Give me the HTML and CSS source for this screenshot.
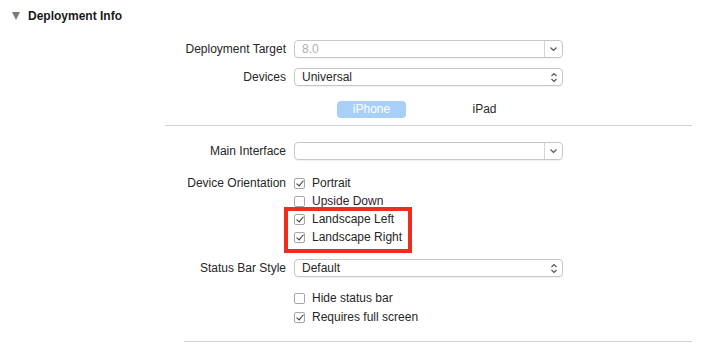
FILE: index.html
```html
<!DOCTYPE html>
<html lang="en">
<head>
    <meta charset="UTF-8">
    <title>Deployment Info</title>
    <link rel="stylesheet" href="styles.css">
</head>
<body>
    <div class="section-head">
        <span class="disclosure"></span>
        <span class="section-title">Deployment Info</span>
    </div>

    <div class="form">
        <div class="row">
            <label class="label">Deployment Target</label>
            <div class="popup combo">
                <span class="value muted">8.0</span>
                <span class="arrow-box">
                    <svg width="9" height="6" viewBox="0 0 9 6"><path d="M1.5 1.5 L4.5 4.5 L7.5 1.5" fill="none" stroke="#555" stroke-width="1.2"/></svg>
                </span>
            </div>
        </div>

        <div class="row">
            <label class="label">Devices</label>
            <div class="popup">
                <span class="value">Universal</span>
                <span class="stepper">
                    <svg width="8" height="11" viewBox="0 0 8 11"><path d="M1.5 4 L4 1.5 L6.5 4 M1.5 7 L4 9.5 L6.5 7" fill="none" stroke="#555" stroke-width="1.2"/></svg>
                </span>
            </div>
        </div>

        <div class="segments">
            <span class="segment active">iPhone</span>
            <span class="segment">iPad</span>
        </div>
    </div>

    <hr class="divider">

    <div class="form">
        <div class="row main-iface">
            <label class="label">Main Interface</label>
            <div class="popup combo">
                <span class="value"></span>
                <span class="arrow-box">
                    <svg width="9" height="6" viewBox="0 0 9 6"><path d="M1.5 1.5 L4.5 4.5 L7.5 1.5" fill="none" stroke="#555" stroke-width="1.2"/></svg>
                </span>
            </div>
        </div>

        <div class="row orient">
            <label class="label">Device Orientation</label>
            <div class="checks">
                <div class="check on"><span class="box"></span>Portrait</div>
                <div class="check"><span class="box"></span>Upside Down</div>
                <div class="highlight">
                    <div class="check on"><span class="box"></span>Landscape Left</div>
                    <div class="check on"><span class="box"></span>Landscape Right</div>
                </div>
            </div>
        </div>

        <div class="row status">
            <label class="label">Status Bar Style</label>
            <div class="popup">
                <span class="value">Default</span>
                <span class="stepper">
                    <svg width="8" height="11" viewBox="0 0 8 11"><path d="M1.5 4 L4 1.5 L6.5 4 M1.5 7 L4 9.5 L6.5 7" fill="none" stroke="#555" stroke-width="1.2"/></svg>
                </span>
            </div>
        </div>

        <div class="row extra">
            <span class="label"></span>
            <div class="checks tight">
                <div class="check"><span class="box"></span>Hide status bar</div>
                <div class="check on"><span class="box"></span>Requires full screen</div>
            </div>
        </div>
    </div>

    <hr class="divider bottom">
</body>
</html>
```

FILE: styles.css
```css
* {
    margin: 0;
    padding: 0;
    box-sizing: border-box;
}

body {
    background: #ffffff;
    font-family: 'Liberation Sans', Arial, sans-serif;
    font-size: 12px;
    color: #262626;
}

/* header */
.section-head {
    display: flex;
    align-items: center;
    height: 30px;
    padding-left: 12px;
    padding-top: 1px;
}

.disclosure {
    width: 0;
    height: 0;
    border-left: 4.5px solid transparent;
    border-right: 4.5px solid transparent;
    border-top: 8px solid #7a7a7a;
    margin-right: 8px;
}

.section-title {
    font-weight: bold;
    font-size: 12px;
    color: #1a1a1a;
}

/* form rows */
.form {
    padding-left: 166px;
}

.row {
    display: flex;
    align-items: flex-start;
    margin-top: 10px;
}

.label {
    width: 120px;
    margin-right: 8px;
    text-align: right;
    line-height: 18px;
    color: #262626;
}

.popup {
    position: relative;
    width: 269px;
    height: 18px;
    border: 1px solid #c6c6c6;
    border-radius: 4px;
    display: flex;
    align-items: center;
    box-shadow: 0 1px 0 rgba(0, 0, 0, 0.05);
}

.value {
    flex: 1;
    padding-left: 7px;
    line-height: 16px;
}

.muted {
    color: #b0b0b0;
}

.arrow-box {
    width: 18px;
    height: 16px;
    border-left: 1px solid #d4d4d4;
    display: flex;
    align-items: center;
    justify-content: center;
}

.stepper {
    width: 16px;
    display: flex;
    align-items: center;
    justify-content: center;
}

/* segmented */
.segments {
    display: flex;
    gap: 44px;
    margin-top: 15px;
    padding-left: 171px;
}

.segment {
    width: 69px;
    height: 17px;
    line-height: 17px;
    text-align: center;
    border-radius: 4px;
    color: #2a2a2a;
}

.segment.active {
    background: #a8cff8;
    color: #ffffff;
}

.divider {
    border: none;
    border-top: 1px solid #cfcfcf;
    margin: 7px 18px 0 165px;
}

.divider.bottom {
    margin: 15px 18px 0 184px;
}

.main-iface {
    margin-top: 16px;
}

/* checkboxes */
.orient {
    margin-top: 14px;
}

.checks {
    display: flex;
    flex-direction: column;
}

.check {
    display: flex;
    align-items: center;
    height: 18px;
    color: #262626;
}

.tight .check + .check {
    margin-top: 1px;
}

.box {
    width: 11px;
    height: 11px;
    border: 1px solid #a6a6a6;
    border-radius: 2px;
    background: #fff;
    margin-right: 7px;
    position: relative;
}

.check.on .box::after {
    content: "";
    position: absolute;
    left: 3px;
    top: 0px;
    width: 3px;
    height: 6px;
    border-right: 1.5px solid #333;
    border-bottom: 1.5px solid #333;
    transform: rotate(40deg);
}

/* red annotation round the landscape rows */
.highlight {
    position: relative;
}

.highlight::after {
    content: "";
    box-sizing: border-box;
    position: absolute;
    left: -10px;
    top: -3px;
    width: 128px;
    height: 46px;
    border: 4px solid #ee2d1a;
}

.status {
    margin-top: 13px;
}

.extra {
    margin-top: 12px;
}
```
